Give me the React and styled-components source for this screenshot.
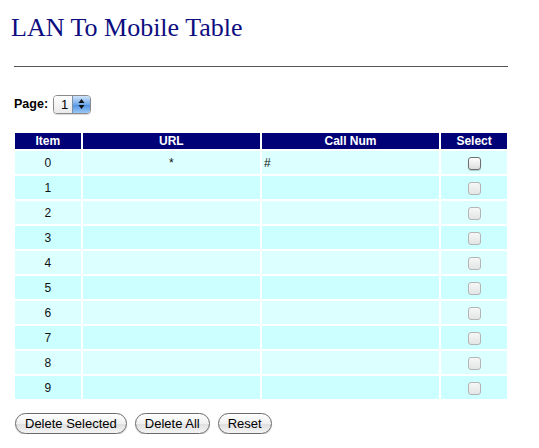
import React from "react";
import styled, { createGlobalStyle } from "styled-components";

const Global = createGlobalStyle`
  html, body { margin: 0; padding: 0; background: #fff; }
  body { font-family: "Liberation Sans", Arial, sans-serif; }
`;

const Page = styled.div`
  padding: 12px 14px 0 14px;
  width: 494px;
`;

const Title = styled.h1`
  margin: 0;
  font-family: "Liberation Serif", "Times New Roman", serif;
  font-weight: normal;
  font-size: 26px;
  line-height: 32px;
  color: #0d0d80;
  margin-left: -3px;
`;

const Rule = styled.div`
  margin-top: 22px;
  height: 1px;
  background: #555;
  width: 494px;
`;

const PageRow = styled.div`
  display: flex;
  align-items: center;
  gap: 5px;
  margin-top: 27px;
  height: 20px;
`;

const Label = styled.span`
  font-weight: bold;
  font-size: 12.5px;
  color: #000;
`;

const Stepper = styled.div`
  display: flex;
  height: 17px;
  border: 1px solid #8a8a8a;
  border-radius: 4px;
  overflow: hidden;
  box-shadow: 0 1px 1px rgba(0,0,0,0.15);
`;

const StepValue = styled.span`
  font-size: 13px;
  line-height: 17px;
  padding: 0 4px 0 7px;
  background: linear-gradient(#fdfdfd, #eaeaea);
`;

const StepArrows = styled.span`
  width: 17px;
  background: linear-gradient(#cfe3fa, #6fa8ea 50%, #4b8fe0 51%, #9cc8f4);
  border-left: 1px solid #7d8fa6;
  display: flex;
  align-items: center;
  justify-content: center;
`;

const Table = styled.table`
  margin-top: 17px;
  margin-left: -1px;
  border-collapse: separate;
  border-spacing: 2px;
  width: 496px;
  font-size: 12px;
`;

const Th = styled.th`
  background: #000077;
  color: #fff;
  font-weight: bold;
  font-size: 12px;
  height: 16px;
  padding: 0;
  line-height: 16px;
  width: ${(p) => p.$w}px;
`;

const Td = styled.td`
  background: ${(p) => (p.$odd ? "#ccffff" : "#dcffff")};
  height: 23px;
  padding: 0 2px;
  text-align: ${(p) => p.$align || "center"};
  vertical-align: middle;
  font-size: 12px;
  color: #111;
`;

const Box = styled.span`
  display: inline-block;
  width: 11px;
  height: 11px;
  margin-top: 2px;
  border: 1px solid ${(p) => (p.$enabled ? "#6e6e6e" : "#b4b4b4")};
  border-radius: 3px;
  background: ${(p) =>
    p.$enabled
      ? "linear-gradient(#ffffff, #dcdcdc)"
      : "linear-gradient(#f6f6f6, #e3e6e6)"};
  box-shadow: ${(p) => (p.$enabled ? "0 1px 1px rgba(0,0,0,0.2)" : "none")};
  vertical-align: middle;
`;

const Buttons = styled.div`
  display: flex;
  gap: 8px;
  margin-top: 12px;
  margin-left: 1px;
`;

const Button = styled.button`
  font-family: "Liberation Sans", Arial, sans-serif;
  font-size: 13px;
  height: 21px;
  padding: 0 9px;
  border: 1px solid #6a6a6a;
  border-radius: 11px;
  background: linear-gradient(#ffffff, #f0f0f0 50%, #dedede 51%, #f4f4f4);
  color: #000;
  box-shadow: 0 1px 1px rgba(0,0,0,0.2);
`;

const rows = Array.from({ length: 10 }, (_, i) => i);

export default function App() {
  return (
    <Page>
      <Global />
      <Title>LAN To Mobile Table</Title>
      <Rule />
      <PageRow>
        <Label>Page:</Label>
        <Stepper>
          <StepValue>1</StepValue>
          <StepArrows>
            <svg width="7" height="12" viewBox="0 0 7 12">
              <path d="M3.5 1 L6.5 5 L0.5 5 Z" fill="#111" />
              <path d="M3.5 11 L6.5 7 L0.5 7 Z" fill="#111" />
            </svg>
          </StepArrows>
        </Stepper>
      </PageRow>
      <Table>
        <thead>
          <tr>
            <Th $w={66}>Item</Th>
            <Th $w={178}>URL</Th>
            <Th $w={178}>Call Num</Th>
            <Th $w={66}>Select</Th>
          </tr>
        </thead>
        <tbody>
          {rows.map((i) => (
            <tr key={i}>
              <Td $odd={i % 2 === 1}>{i}</Td>
              <Td $odd={i % 2 === 1}>{i === 0 ? "*" : ""}</Td>
              <Td $odd={i % 2 === 1} $align="left">{i === 0 ? "#" : ""}</Td>
              <Td $odd={i % 2 === 1}>
                <Box $enabled={i === 0} />
              </Td>
            </tr>
          ))}
        </tbody>
      </Table>
      <Buttons>
        <Button>Delete Selected</Button>
        <Button>Delete All</Button>
        <Button>Reset</Button>
      </Buttons>
    </Page>
  );
}
